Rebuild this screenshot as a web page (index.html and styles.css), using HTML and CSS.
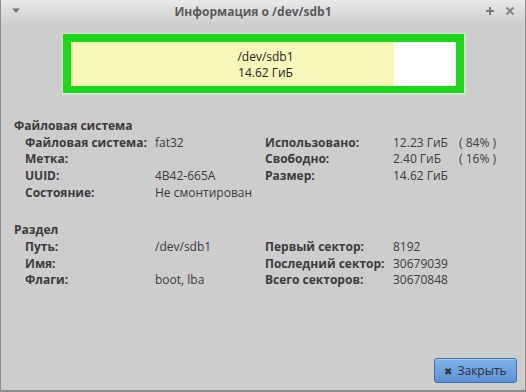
FILE: index.html
```html
<!DOCTYPE html>
<html lang="ru">
<head>
    <meta charset="UTF-8">
    <title>Информация о /dev/sdb1</title>
    <link rel="stylesheet" href="styles.css">
</head>
<body>

<div class="window">
    <div class="titlebar">
        <svg class="menu-btn" width="10" height="6" viewBox="0 0 10 6"><path d="M1 0.5h8L5 5z" fill="#777"/></svg>
        <div class="title">Информация о /dev/sdb1</div>
        <div class="controls">
            <svg width="10" height="10" viewBox="0 0 10 10"><path d="M5 1v8M1 5h8" stroke="#777" stroke-width="2"/></svg>
            <svg width="10" height="10" viewBox="0 0 10 10"><path d="M1.5 1.5l7 7M8.5 1.5l-7 7" stroke="#888" stroke-width="2"/></svg>
        </div>
    </div>

    <div class="content">
        <div class="graph">
            <div class="partition">
                <div class="bars">
                    <div class="used" style="width: 84%"></div>
                    <div class="free"></div>
                </div>
                <div class="graph-label">/dev/sdb1<br>14.62 ГиБ</div>
            </div>
        </div>

        <div class="group">
            <div class="group-title">Файловая система</div>
            <div class="info">
                <div class="key">Файловая система:</div><div class="val">fat32</div>
                <div class="key">Использовано:</div><div class="val"><span class="num">12.23 ГиБ</span><span>( 84% )</span></div>
                <div class="key">Метка:</div><div class="val"></div>
                <div class="key">Свободно:</div><div class="val"><span class="num">2.40 ГиБ</span><span>( 16% )</span></div>
                <div class="key">UUID:</div><div class="val">4B42-665A</div>
                <div class="key">Размер:</div><div class="val">14.62 ГиБ</div>
                <div class="key">Состояние:</div><div class="val">Не смонтирован</div>
                <div class="key"></div><div class="val"></div>
            </div>
        </div>

        <div class="group">
            <div class="group-title">Раздел</div>
            <div class="info">
                <div class="key">Путь:</div><div class="val">/dev/sdb1</div>
                <div class="key">Первый сектор:</div><div class="val">8192</div>
                <div class="key">Имя:</div><div class="val"></div>
                <div class="key">Последний сектор:</div><div class="val">30679039</div>
                <div class="key">Флаги:</div><div class="val">boot, lba</div>
                <div class="key">Всего секторов:</div><div class="val">30670848</div>
            </div>
        </div>

        <div class="actions">
            <button class="close-btn"><span class="x">✖</span> Закрыть</button>
        </div>
    </div>
</div>

</body>
</html>
```

FILE: styles.css
```css
* {
    box-sizing: border-box;
    margin: 0;
    padding: 0;
}
body {
    font-family: "Open Sans", "Noto Sans", sans-serif;
    font-size: 12px;
    color: #3b3b3b;
    background: #cdcdcd;
}
.window {
    width: 526px;
    height: 392px;
    display: flex;
    flex-direction: column;
    background: #cdcdcd;
    border-left: 1px solid #8c8c8c;
    border-right: 1px solid #8c8c8c;
    border-bottom: 2px solid #8c8c8c;
}
.titlebar {
    height: 24px;
    display: flex;
    align-items: center;
    padding: 0 10px 2px 10px;
    background: linear-gradient(#e9e9e9, #cfcfcf);
}
.menu-btn {
    width: 10px;
}
.title {
    flex: 1;
    text-align: center;
    font-weight: bold;
    font-size: 12px;
    color: #5a5a5a;
}
.controls {
    display: flex;
    gap: 10px;
}
.content {
    flex: 1;
    display: flex;
    flex-direction: column;
    padding: 0 8px 7px 13px;
}
.graph {
    margin: 9px 0 0 48px;
    width: 404px;
    height: 62px;
    border: 1px solid #dcdcdc;
    border-right-width: 2px;
    border-bottom-width: 2px;
    background: #1bd81b;
    padding: 8px;
}
.partition {
    display: grid;
    height: 44px;
}
.bars, .graph-label {
    grid-area: 1 / 1;
}
.bars {
    display: flex;
}
.used {
    background: #f7f7b9;
}
.free {
    flex: 1;
    background: #fff;
}
.graph-label {
    text-align: center;
    line-height: 16px;
    padding-top: 7px;
    padding-left: 4px;
    color: #222;
}
.group {
    margin-top: 22px;
}
.group + .group {
    margin-top: 21px;
}
.group-title {
    font-weight: bold;
    line-height: 17px;
}
.info {
    display: grid;
    grid-template-columns: 130px 110px 128px 1fr;
    padding-left: 11px;
    grid-auto-rows: 16.6px;
    align-items: center;
}
.key {
    font-weight: bold;
}
.val {
    display: flex;
}
.num {
    width: 66px;
}
.actions {
    margin-top: auto;
    display: flex;
    justify-content: flex-end;
}
.close-btn {
    width: 83px;
    height: 25px;
    font: inherit;
    color: #2d2d2d;
    border: 1px solid #3f6fae;
    border-radius: 3px;
    background: linear-gradient(#7fb1ea, #5d92d6);
    box-shadow: inset 0 1px 0 rgba(255, 255, 255, 0.35);
}
.close-btn .x {
    font-size: 10px;
    color: #333;
    margin-right: 2px;
}
```
